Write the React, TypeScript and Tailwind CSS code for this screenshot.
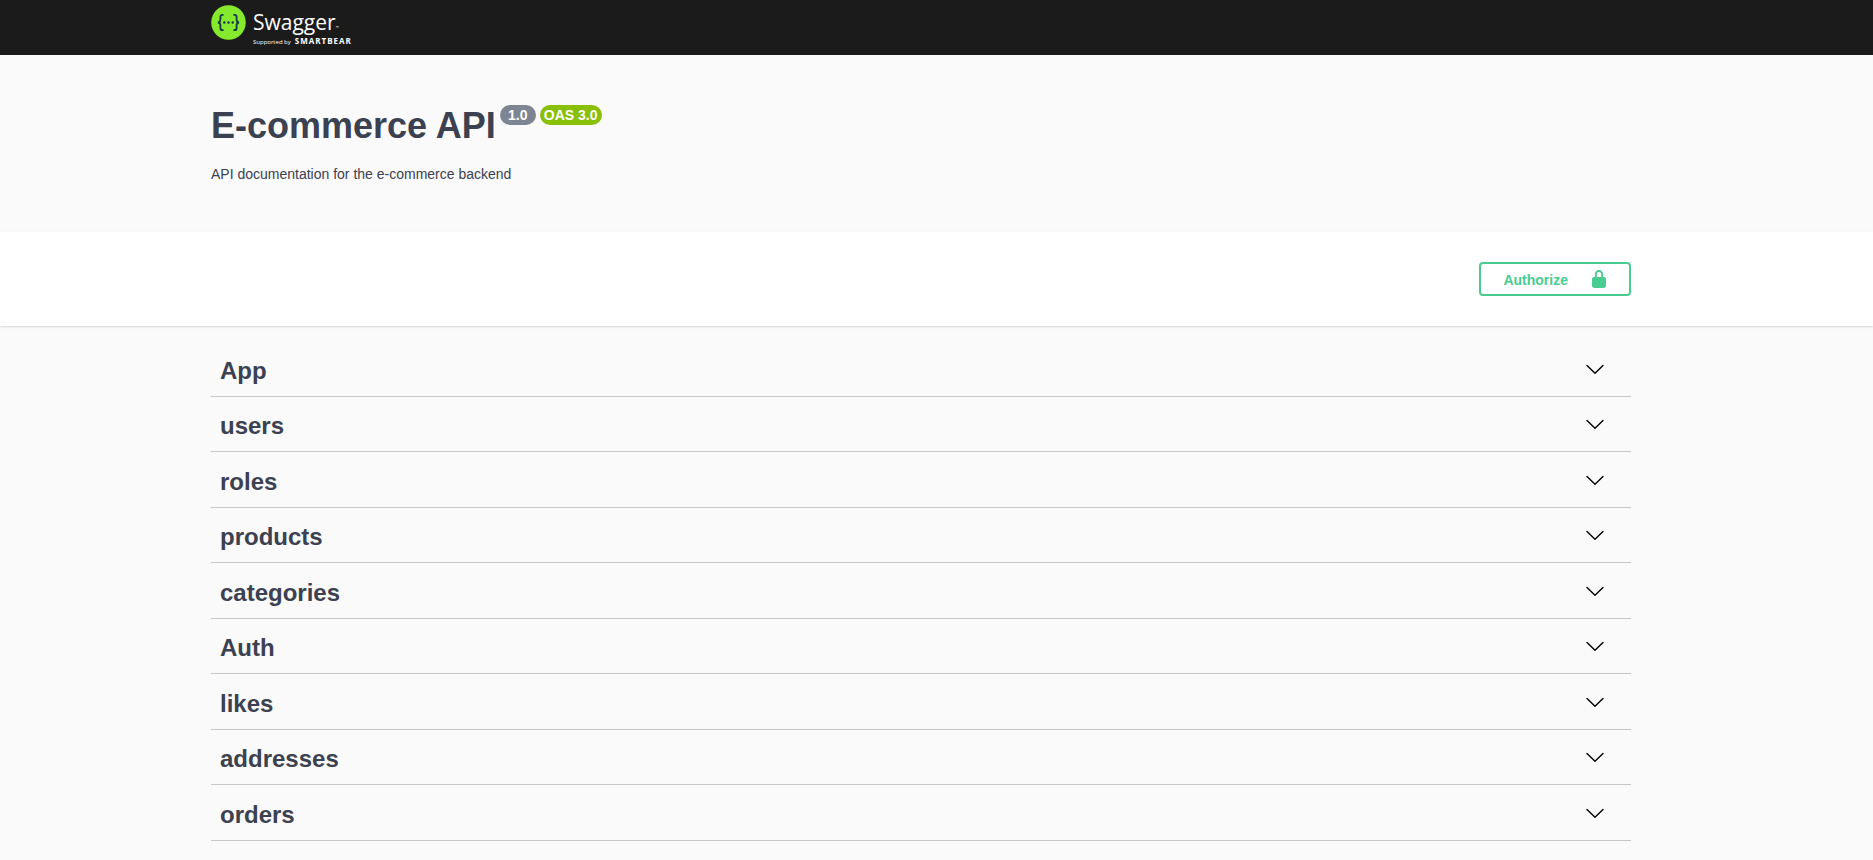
import React from 'react'

const tags = ['App', 'users', 'roles', 'products', 'categories', 'Auth', 'likes', 'addresses', 'orders']

const Wrapper = ({ children }: { children: React.ReactNode }) => (
  <div className="pr-[31px]">
    <div className="mx-auto w-full max-w-[1460px] px-5">{children}</div>
  </div>
)

const LogoMark = () => (
  <svg width="35" height="35" viewBox="0 0 35 35" aria-hidden="true">
    <circle cx="17.5" cy="17.5" r="17.3" fill="#85ea2d" />
    <g fill="none" stroke="#173647" strokeWidth="1.8">
      <path d="M12.600 9.800h-1.100c-1.500 0-2.100.8-2.100 2.300v2.500c0 1.900-.8 2.800-2.500 2.900 1.700.1 2.500 1 2.500 2.900v2.500c0 1.500.6 2.300 2.100 2.300h1.100" />
      <path d="M22.400 9.800h1.100c1.500 0 2.100.8 2.100 2.300v2.500c0 1.900.8 2.800 2.500 2.900-1.700.1-2.500 1-2.500 2.900v2.500c0 1.500-.6 2.300-2.100 2.300h-1.100" />
    </g>
    <g fill="#173647">
      <circle cx="13.3" cy="17.5" r="1.2" />
      <circle cx="17.5" cy="17.5" r="1.2" />
      <circle cx="21.7" cy="17.5" r="1.2" />
    </g>
  </svg>
)

const Topbar = () => (
  <header className="h-[55px] bg-[#1b1b1b]">
    <Wrapper>
      <a href="#" aria-label="Swagger" className="flex w-fit items-start gap-[7px] pt-[5px] font-['Open_Sans',sans-serif] text-white">
        <LogoMark />
        <span className="block">
          <span className="flex h-[30px] items-start text-[21px] leading-[34px]">
            Swagger<span className="pt-5 text-[4px] leading-[6px]">™</span>
          </span>
          <span className="flex items-baseline gap-1 text-[6px] leading-[12px]">
            Supported by <b className="text-[8px] tracking-[1px]">SMARTBEAR</b>
          </span>
        </span>
      </a>
    </Wrapper>
  </header>
)

const Info = () => (
  <section className="h-[177px] pt-[50px]">
    <Wrapper>
      <div className="flex items-start gap-1">
        <h1 className="text-[36px] leading-[41px] font-bold">E-commerce API</h1>
        <span className="flex h-5 w-9 items-center justify-center rounded-full bg-[#7d8492] text-[14px] font-bold text-white">1.0</span>
        <span className="flex h-5 items-center rounded-full bg-[#89bf04] px-1 text-[14px] font-bold text-white">OAS 3.0</span>
      </div>
      <p className="mt-[20px] text-[14px] leading-[16px]">API documentation for the e-commerce backend</p>
    </Wrapper>
  </section>
)

const Authorize = () => (
  <section className="bg-white py-[30px] shadow-[0_1px_2px_0_rgba(0,0,0,0.15)]">
    <Wrapper>
      <div className="flex justify-end">
        <button
          type="button"
          className="flex h-[34px] items-center rounded border-2 border-[#49cc90] pr-[23px] pl-[22px] text-[14px] font-bold text-[#49cc90]"
        >
          <span className="pt-[2px] pr-6">Authorize</span>
          <svg width="14" height="18" viewBox="0 0 14 18" fill="currentColor" aria-hidden="true">
            <path d="M2 7h.9V4.100C2.900 1.800 4.700 0 7 0s4.100 1.800 4.100 4.100V7h.9c1.100 0 2 .9 2 2v6.500c0 1.400-1.100 2.500-2.500 2.500h-9C1.100 18 0 16.900 0 15.500V9c0-1.100.9-2 2-2zm2.800 0h4.400V4.100C9.200 2.800 8.300 1.900 7 1.900s-2.200.9-2.200 2.200z" />
          </svg>
        </button>
      </div>
    </Wrapper>
  </section>
)

const TagRow = ({ name }: { name: string }) => (
  <li className="h-14 border-b border-[#c4c6ca] even:h-[55px]">
    <button type="button" className="flex h-full w-full items-center justify-between pr-[26px] pl-[9px] text-left">
      <h2 className="pt-[4px] text-[24px] leading-[28px] font-bold">{name}</h2>
      <svg width="20" height="20" viewBox="0 0 20 20" aria-hidden="true">
        <path d="M2 6.500 10 14.200l8-7.700" fill="none" stroke="#000" strokeWidth="1.4" strokeLinecap="round" strokeLinejoin="round" />
      </svg>
    </button>
  </li>
)

export default function App() {
  return (
    <div className="min-h-screen bg-[#fafafa] font-['Liberation_Sans',Arial,sans-serif] text-[#3b4151]">
      <Topbar />
      <main>
        <Info />
        <Authorize />
        <section className="pt-[15px] pb-[19px]">
          <Wrapper>
            <ul>
              {tags.map((tag) => (
                <TagRow key={tag} name={tag} />
              ))}
            </ul>
          </Wrapper>
        </section>
      </main>
    </div>
  )
}
